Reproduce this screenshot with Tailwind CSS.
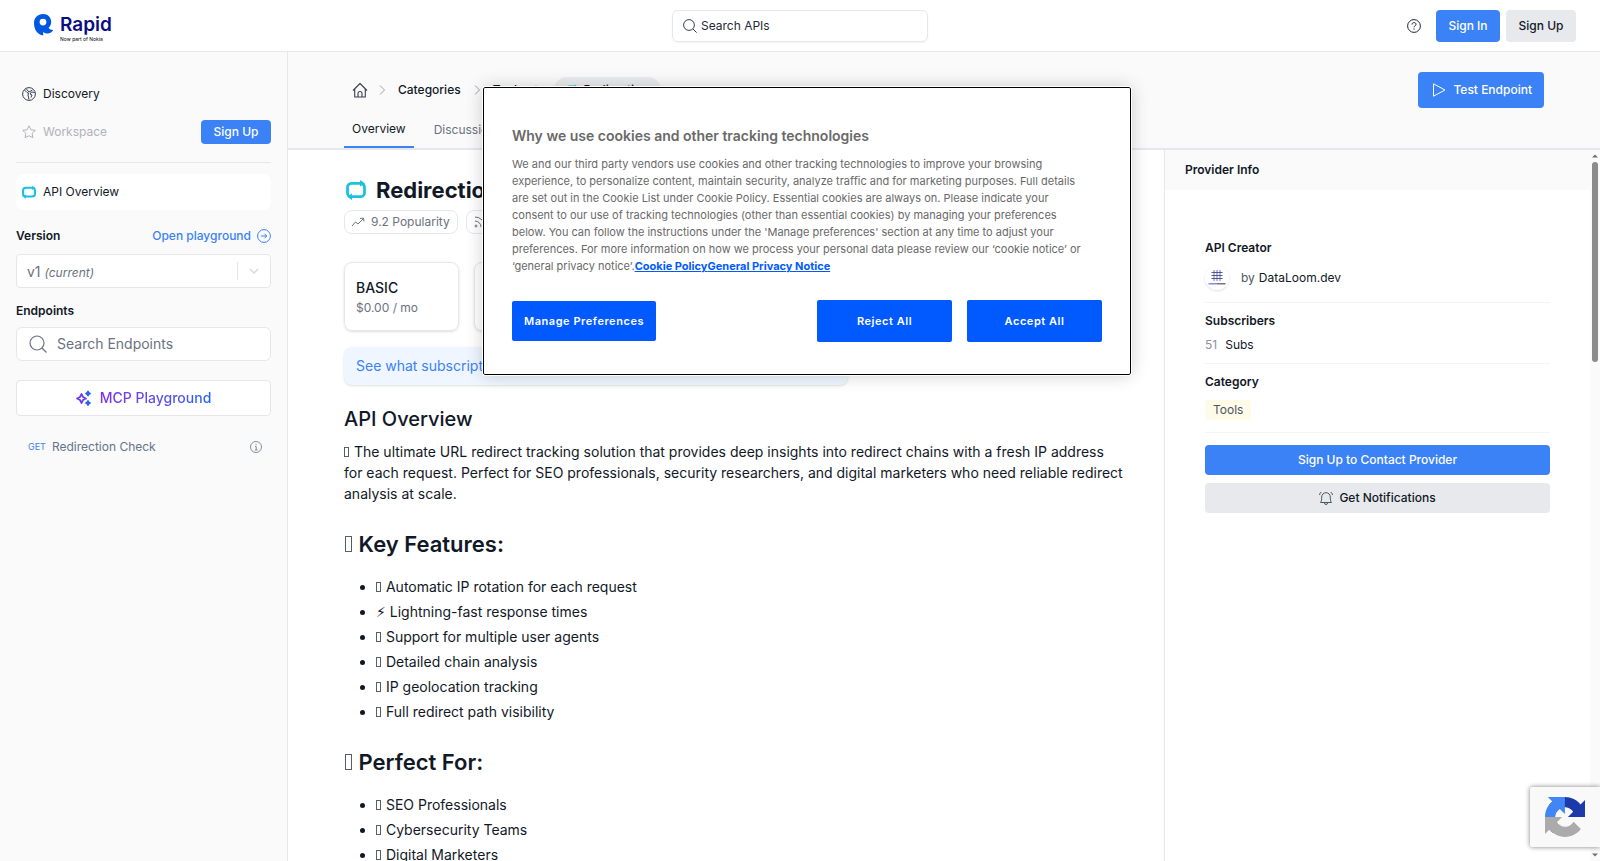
<!DOCTYPE html>
<html lang="en">
  <head>
    <meta charset="UTF-8" />
    <meta name="viewport" content="width=device-width, initial-scale=1.0" />
    <title>Redirection Check - Rapid</title>
    <script src="https://cdn.jsdelivr.net/npm/@tailwindcss/browser@4"></script>
  </head>
  <body class="flex flex-col h-screen overflow-hidden bg-white text-[#111827] text-[12px] leading-5 font-['Inter','DejaVu_Sans',sans-serif]">
    <!-- top bar -->
    <header class="grid grid-cols-3 items-center h-[52px] shrink-0 border-b border-gray-200 px-6">
      <a href="#" class="flex items-start gap-1.5 w-fit pl-2.5 pt-1" aria-label="Rapid">
        <svg class="w-5 h-[22px]" viewBox="0 0 20 22" fill="#0058e0">
          <path fill-rule="evenodd" d="M9 0C14 0 17.200 3.400 17.200 7.800c0 2.800-1.100 4.800-2.600 6 .9 1.500 2.200 2.100 4.600 2.200-1.400 2.600-3.800 3.800-6.600 3.400-1.300-.2-2.400-.7-3.400-1.500V21.500C3 20.500 0 15.500 0 9 0 3.600 4 0 9 0Zm0 4.700a3.400 3.400 0 1 0 0 6.800 3.400 3.400 0 0 0 0-6.800Z" />
        </svg>
        <span class="flex flex-col">
          <span class="text-[19px] leading-[22px] font-semibold text-[#0a0e80]">Rapid</span>
          <span class="text-[5px] leading-[6px] text-black">Now part of Nokia</span>
        </span>
      </a>
      <label class="justify-self-center flex items-center gap-1 w-64 h-8 px-2.5 rounded-md border border-gray-200 shadow-xs">
        <svg class="size-3.5 shrink-0" viewBox="0 0 14 14" fill="none" stroke="#374151" stroke-width="1"><circle cx="6" cy="6" r="5.400" /><path d="m10 10 3.600 3.600" /></svg>
        <input type="text" placeholder="Search APIs" aria-label="Search APIs" class="w-full outline-none placeholder:text-[#1f2937]" />
      </label>
      <div class="justify-self-end flex items-center">
        <button aria-label="Help" class="mr-[15px]">
          <svg class="size-3.5" viewBox="0 0 14 14" fill="none" stroke="#1f2937" stroke-width="1"><circle cx="7" cy="7" r="6.400" /><path d="M5 5.500C5 4.300 5.800 3.600 7 3.600s2 .7 2 1.800c0 1.400-2 1.600-2 2.900M7 9.400v1.200" /></svg>
        </button>
        <button class="w-16 h-8 mr-1.5 rounded bg-[#3b82f6] text-white font-medium">Sign In</button>
        <button class="w-[70px] h-8 rounded bg-[#e8e9ed] font-medium">Sign Up</button>
      </div>
    </header>

    <div class="flex flex-1 min-h-0">
      <!-- sidebar -->
      <aside class="w-72 shrink-0 border-r border-gray-200 bg-[#fafafa] px-4 pt-8">
        <a href="#" class="flex items-center gap-[7px] h-5 pl-1.5">
          <svg class="size-3.5" viewBox="0 0 14 14" fill="none" stroke="#374151" stroke-width="1"><circle cx="7" cy="7" r="6.400" /><path d="M2.500 3 5 5.500l1.500.5L6 8l1 4.500M4 1.500 7 5l3.500-2M12.800 5.500 9.500 5 8 7l2 1-1 2.500" /></svg>
          Discovery
        </a>
        <div class="flex items-center justify-between mt-4 h-6">
          <a href="#" class="flex items-center gap-[7px] pl-1.5 text-[#b0b3b8]">
            <svg class="size-3.5" viewBox="0 0 14 14" fill="none" stroke="#b0b3b8" stroke-width="1" stroke-linejoin="round"><path d="m7 .8 1.900 4 4.400.6-3.200 3 .8 4.400L7 10.700l-3.900 2.100.8-4.400-3.200-3 4.400-.6Z" /></svg>
            Workspace
          </a>
          <button class="w-[70px] h-6 rounded bg-[#3b82f6] text-white font-medium">Sign Up</button>
        </div>
        <hr class="mt-[18px] border-gray-200" />
        <a href="#" class="flex items-center gap-[7px] mt-[11px] h-9 pl-1.5 rounded-lg bg-white">
          <svg class="size-3.5" viewBox="0 0 20 20" fill="none" stroke="#19c2e0" stroke-width="3"><rect x="1.500" y="4" width="17" height="12.500" rx="4" /><path fill="#19c2e0" stroke="none" d="M14.500 1 19 4l-4.500 3ZM5.500 13.500 1 16.500l4.500 3Z" /></svg>
          API Overview
        </a>
        <div class="flex items-center justify-between mt-4 h-5">
          <label for="version" class="font-semibold">Version</label>
          <a href="#" class="flex items-center gap-1.5 text-[#3b82f6] font-medium">
            Open playground
            <svg class="size-3.5" viewBox="0 0 14 14" fill="none" stroke="#3b82f6" stroke-width="1"><circle cx="7" cy="7" r="6.400" /><path d="M3.800 7h6M7.500 4.700 9.800 7 7.500 9.300" /></svg>
          </a>
        </div>
        <div class="relative flex items-center mt-2 h-[34px] rounded border border-gray-200 bg-white">
          <select id="version" class="absolute inset-0 opacity-0 w-full"><option>v1 (current)</option></select>
          <span class="flex-1 pl-2.5 pt-0.5 text-[#6b7280] text-[14px]">v1 <i class="text-[12px]">(current)</i></span>
          <span class="w-px h-[18px] bg-gray-200"></span>
          <svg class="mx-2.5 size-3" viewBox="0 0 12 12" fill="none" stroke="#d9dbdf" stroke-width="1.500"><path d="m2 4 4 4 4-4" /></svg>
        </div>
        <h2 class="mt-[13px] font-semibold">Endpoints</h2>
        <label class="flex items-center gap-2.5 mt-1.5 h-[34px] px-3 rounded-md border border-gray-200 bg-white">
          <svg class="size-[18px] shrink-0" viewBox="0 0 18 18" fill="none" stroke="#6b7280" stroke-width="1.200"><circle cx="8" cy="8" r="7" /><path d="m13 13 4.500 4.500" /></svg>
          <input type="text" placeholder="Search Endpoints" aria-label="Search Endpoints" class="w-full outline-none text-[14px] placeholder:text-[#6b7280]" />
        </label>
        <button class="flex items-center justify-center gap-2 mt-[19px] w-full h-9 rounded border border-gray-200 bg-white text-[14px] font-medium">
          <svg class="size-4" viewBox="0 0 16 16" fill="none" stroke="#6b3cf0" stroke-width="1.700" stroke-linejoin="round">
            <path d="M5.500 4 7 7l3 1.500L7 10l-1.500 3L4 10 1 8.500 4 7Z" /><path stroke="#2563eb" d="m12 1.500.7 1.300 1.300.7-1.300.7L12 5.500l-.7-1.300-1.300-.7 1.300-.7ZM12 11l.7 1.300 1.300.7-1.300.7-.7 1.300-.7-1.300-1.300-.7 1.300-.7Z" />
          </svg>
          <span class="bg-linear-to-r from-[#7c2fe8] to-[#1e62f5] bg-clip-text text-transparent">MCP Playground</span>
        </button>
        <a href="#" class="flex items-center mt-[21px] h-5 pl-3 pr-[9px] text-[#64748b]">
          <span class="mr-1.5 text-[9px] text-[#3b82f6]">GET</span>
          <span class="flex-1">Redirection Check</span>
          <svg class="size-3" viewBox="0 0 12 12" fill="none" stroke="#8690a0" stroke-width="1"><circle cx="6" cy="6" r="5.500" /><path d="M5 5.500h1.200V9M4.800 9h2.800M6 3v1.200" /></svg>
        </a>
      </aside>

      <div class="flex flex-col flex-1 min-w-0">
        <!-- breadcrumb and tabs -->
        <div class="flex justify-between h-[98px] shrink-0 border-b-2 border-gray-200 bg-[#fafafa] px-14">
          <div class="flex flex-col justify-between">
            <nav class="flex items-center mt-[25px] h-[26px] pl-2">
              <svg class="size-4" viewBox="0 0 16 16" fill="none" stroke="#374151" stroke-width="1.100" stroke-linejoin="round"><path d="M1 8.500 8 1.500l7 7M2.700 7v8h10.600V7M6 15v-3.500a2 2 0 0 1 4 0V15" /></svg>
              <svg class="ml-2 size-3" viewBox="0 0 12 12" fill="none" stroke="#9ca3af"><path d="m4 1.500 4.500 4.500L4 10.500" /></svg>
              <a href="#" class="ml-2.5 font-medium">Categories</a>
              <svg class="ml-2.5 size-3" viewBox="0 0 12 12" fill="none" stroke="#9ca3af"><path d="m4 1.500 4.500 4.500L4 10.500" /></svg>
              <a href="#" class="ml-2.5 font-medium">Tools</a>
              <svg class="ml-2 size-3" viewBox="0 0 12 12" fill="none" stroke="#9ca3af"><path d="m4 1.500 4.500 4.500L4 10.500" /></svg>
              <a href="#" class="flex items-center gap-1.5 ml-2.5 h-[26px] px-3 rounded-full bg-[#ebecef] font-medium">
                <svg class="size-3" viewBox="0 0 20 20" fill="none" stroke="#19c2e0" stroke-width="2.600"><rect x="1.500" y="4" width="17" height="12.500" rx="4" /><path fill="#19c2e0" stroke="none" d="M14.500 1 18.500 4l-4 3Z" /></svg>
                Redirection
              </a>
            </nav>
            <nav class="flex items-end gap-5">
              <a href="#" class="px-2 pb-[7px] border-b-2 border-[#3b82f6]">Overview</a>
              <a href="#" class="pb-1.5 border-b-2 border-transparent text-[#6b7280]">Discussions</a>
            </nav>
          </div>
          <button class="flex items-center gap-[7px] mt-5 h-9 px-3 rounded bg-[#3b82f6] text-white font-medium">
            <svg class="ml-0.5 size-3.5" viewBox="0 0 14 14" fill="none" stroke="#fff" stroke-width="1" stroke-linejoin="round"><path d="M1.500.8v12.400L13 7Z" /></svg>
            Test Endpoint
          </button>
        </div>

        <div class="flex flex-1 min-h-0">
          <main class="flex-1 min-w-0 pl-14 pr-6 pt-7 overflow-hidden">
            <div class="flex items-center gap-2 h-6">
              <svg class="size-6" viewBox="-2 -2 24 24" fill="none" stroke="#19c2e0" stroke-width="2.800"><rect x="1.500" y="3.300" width="17" height="13.400" rx="4" /><path fill="#19c2e0" stroke="none" d="M14 0 19 3.300 14 6.500ZM6 13.500 1 16.700 6 20Z" /></svg>
              <h1 class="text-[22px] font-bold">Redirection Check</h1>
            </div>
            <div class="flex gap-2 mt-2 h-6 text-[#6b7280]">
              <span class="flex items-center gap-1.5 w-[114px] px-1.5 rounded-lg border border-gray-200">
                <svg class="size-3.5" viewBox="0 0 14 14" fill="none" stroke="#6b7280" stroke-width="1"><path d="m1 11 3.500-4 2.500 2 5-5M9 3.500l3.500-.5.5 3.500" /></svg>
                9.2 Popularity
              </span>
              <span class="flex items-center gap-1.5 w-[114px] px-1.5 rounded-lg border border-gray-200">
                <svg class="size-3.5" viewBox="0 0 14 14" fill="none" stroke="#6b7280" stroke-width="1"><path d="M2 2a10 10 0 0 1 10 10M2 6a6 6 0 0 1 6 6" /><circle cx="3" cy="11" r="1" /></svg>
              </span>
            </div>
            <div class="flex gap-[15px] mt-7">
              <div class="flex flex-col justify-center w-[115px] h-[69px] px-[11px] pt-0.5 rounded-lg border border-gray-200 shadow-sm">
                <span class="text-[14px] font-medium">BASIC</span><span class="text-[#6b7280]">$0.00 / mo</span>
              </div>
              <div class="w-[115px] h-[69px] rounded-lg border border-gray-200 shadow-sm"></div>
            </div>
            <div class="mt-4 w-[504px] h-[38px] px-3 rounded-lg bg-[#eff6ff] shadow-sm text-[14px] leading-[38px] text-[#3b82f6]">See what subscription</div>
            <h2 class="mt-5 text-[20px] leading-7 font-medium">API Overview</h2>
            <p class="mt-2 text-[14px] leading-[21px]"><span class="inline-block w-[5px] h-2.5 mr-px border border-[#111827]/70"></span> The ultimate URL redirect tracking solution that provides deep insights into redirect chains with a fresh IP address<br />for each request. Perfect for SEO professionals, security researchers, and digital marketers who need reliable redirect analysis at scale.</p>
            <h2 class="mt-6 text-[22px] leading-8 font-semibold"><span class="inline-block w-[7px] h-4 mx-px border border-[#111827]/70"></span> Key Features:</h2>
            <ul class="list-disc pl-8 mt-3.5 text-[14px] leading-[25px]">
              <li><span class="inline-block w-[5px] h-2.5 mr-px border border-[#111827]/70"></span> Automatic IP rotation for each request</li>
              <li>&#x26A1;&#xFE0E; Lightning-fast response times</li>
              <li><span class="inline-block w-[5px] h-2.5 mr-px border border-[#111827]/70"></span> Support for multiple user agents</li>
              <li><span class="inline-block w-[5px] h-2.5 mr-px border border-[#111827]/70"></span> Detailed chain analysis</li>
              <li><span class="inline-block w-[5px] h-2.5 mr-px border border-[#111827]/70"></span> IP geolocation tracking</li>
              <li><span class="inline-block w-[5px] h-2.5 mr-px border border-[#111827]/70"></span> Full redirect path visibility</li>
            </ul>
            <h2 class="mt-[22px] text-[22px] leading-8 font-semibold"><span class="inline-block w-[7px] h-4 mx-px border border-[#111827]/70"></span> Perfect For:</h2>
            <ul class="list-disc pl-8 mt-3.5 text-[14px] leading-[25px]">
              <li><span class="inline-block w-[5px] h-2.5 mr-px border border-[#111827]/70"></span> SEO Professionals</li>
              <li><span class="inline-block w-[5px] h-2.5 mr-px border border-[#111827]/70"></span> Cybersecurity Teams</li>
              <li><span class="inline-block w-[5px] h-2.5 mr-px border border-[#111827]/70"></span> Digital Marketers</li>
            </ul>
          </main>

          <!-- provider info -->
          <section class="w-[426px] shrink-0 border-l border-gray-200">
            <h2 class="h-10 px-5 bg-[#fafafa] leading-10 font-semibold">Provider Info</h2>
            <div class="px-10 pt-12">
              <div class="pb-3 border-b border-gray-100">
                <h3 class="font-semibold">API Creator</h3>
                <div class="flex items-center mt-2 h-6">
                  <svg class="size-6 rounded-full shadow" viewBox="0 0 24 24" fill="none"><circle cx="12" cy="12" r="12" fill="#fff" /><path stroke="#a9a4f0" stroke-width="1.600" d="M9 4v11M12 4v11M15 4v11" /><path stroke="#555b7a" stroke-width="1" d="M6.500 6.500h11M6.500 9.500h11M6.500 12.500h11" /><path stroke="#8c88f0" stroke-width="1.500" d="M3.500 17.800H12" /><path stroke="#777" stroke-width="1.500" d="M12 17.800h8.500" /></svg>
                  <span class="ml-3 text-[#4b5563]">by</span><a href="#" class="ml-1">DataLoom.dev</a>
                </div>
              </div>
              <div class="py-2 border-b border-gray-100">
                <h3 class="font-semibold">Subscribers</h3>
                <p class="mt-1"><span class="mr-2 text-[#8b909c]">51</span>Subs</p>
              </div>
              <div class="pt-2 pb-3 border-b border-gray-100">
                <h3 class="font-semibold">Category</h3>
                <a href="#" class="block mt-2 w-fit px-2 rounded bg-[#fefbe8] text-[#4b5563]">Tools</a>
              </div>
              <button class="mt-3 w-full h-[30px] rounded bg-[#3b82f6] text-white font-medium">Sign Up to Contact Provider</button>
              <button class="flex items-center justify-center gap-1.5 mt-2 w-full h-[30px] rounded bg-[#e8e9ed] font-medium">
                <svg class="size-3.5" viewBox="0 0 14 14" fill="none" stroke="#4b5563" stroke-width="1" stroke-linejoin="round"><path d="M1.500 11.500C2.600 10 2.700 8.500 2.700 6a4.300 4.300 0 0 1 8.600 0c0 2.500.1 4 1.200 5.500ZM5.500 12a1.500 1.500 0 0 0 3 0M.5 4Q.8 2 2.300 1M13.500 4Q13.200 2 11.700 1" /></svg>
                Get Notifications
              </button>
            </div>
          </section>

          <!-- scroll track -->
          <div class="flex flex-col items-center w-2.5 shrink-0 bg-[#fafafa] py-1">
            <svg class="w-1.5 h-1" viewBox="0 0 6 4" fill="#707070"><path d="M0 3.500 3 .5l3 3Z" /></svg>
            <span class="mt-1 w-1.5 h-[200px] rounded-full bg-[#8b8b8b]"></span>
            <svg class="mt-auto w-1.5 h-1" viewBox="0 0 6 4" fill="#707070"><path d="m0 .5 3 3 3-3Z" /></svg>
          </div>
        </div>
      </div>
    </div>

    <!-- cookie consent -->
    <div role="dialog" aria-labelledby="cookie-title" class="absolute left-[483px] top-[87px] w-[648px] border border-black rounded-xs outline outline-white bg-white px-7 pt-9 pb-8 text-[#696969] shadow-[0_0_18px_rgba(0,0,0,0.2)]">
      <h2 id="cookie-title" class="text-[14px] leading-6 font-semibold">Why we use cookies and other tracking technologies</h2>
      <p class="mt-2 pr-5 text-[11px] leading-[17px]">We and our third party vendors use cookies and other tracking technologies to improve your browsing experience, to personalize content, maintain security, analyze traffic and for marketing purposes. Full details are set out in the Cookie List under Cookie Policy. Essential cookies are always on. Please indicate your consent to our use of tracking technologies (other than essential cookies) by managing your preferences below. You can follow the instructions under the 'Manage preferences' section at any time to adjust your preferences. For more information on how we process your personal data please review our ‘cookie notice’ or ‘general privacy notice’.<a href="#" class="font-bold underline text-[#005aff]">Cookie Policy</a><a href="#" class="font-bold underline text-[#005aff]">General Privacy Notice</a></p>
      <div class="flex items-center gap-[15px] mt-[25px] text-[11px] font-semibold tracking-wider text-white">
        <button class="w-36 h-10 mr-auto rounded-xs bg-[#005aff]">Manage Preferences</button>
        <button class="w-[135px] h-[42px] rounded-xs bg-[#005aff]">Reject All</button>
        <button class="w-[135px] h-[42px] rounded-xs bg-[#005aff]">Accept All</button>
      </div>
    </div>

    <!-- recaptcha badge -->
    <div class="absolute right-0 bottom-3.5 w-[70px] h-[60px] rounded-l-xs bg-[#f9f9f9] shadow-[0_0_5px_gray] pl-[15px] pt-2.5">
      <svg class="size-10" viewBox="0 0 64 64">
        <path fill="#1c3aa9" d="M64 31.955l-.033-1.370V4.687l-7.160 7.160C50.948 4.674 42.033.093 32.050.093c-10.400 0-19.622 4.960-25.458 12.640l11.736 11.860a15.550 15.550 0 0 1 4.754-5.334c2.050-1.600 4.952-2.906 8.968-2.906.485 0 .860.057 1.135.163 4.976.393 9.288 3.140 11.828 7.124l-8.307 8.307L64 31.953" />
        <path fill="#4285f4" d="M31.862.094l-1.370.033H4.594l7.160 7.160C4.580 13.147 0 22.060 0 32.046c0 10.400 4.960 19.622 12.640 25.458L24.500 45.768a15.550 15.550 0 0 1-5.334-4.754c-1.600-2.050-2.906-4.952-2.906-8.968 0-.485.057-.860.163-1.135.393-4.976 3.140-9.288 7.124-11.828l8.307 8.307L31.860.095" />
        <path fill="#ababab" d="M.001 32.045l.033 1.370v25.898l7.160-7.160c5.860 7.173 14.774 11.754 24.760 11.754 10.400 0 19.622-4.960 25.458-12.640l-11.736-11.860a15.550 15.550 0 0 1-4.754 5.334c-2.050 1.600-4.952 2.906-8.968 2.906-.485 0-.860-.057-1.135-.163-4.976-.393-9.288-3.140-11.828-7.124l8.307-8.307c-10.522.040-22.400.066-27.295-.005" />
      </svg>
    </div>
  </body>
</html>
